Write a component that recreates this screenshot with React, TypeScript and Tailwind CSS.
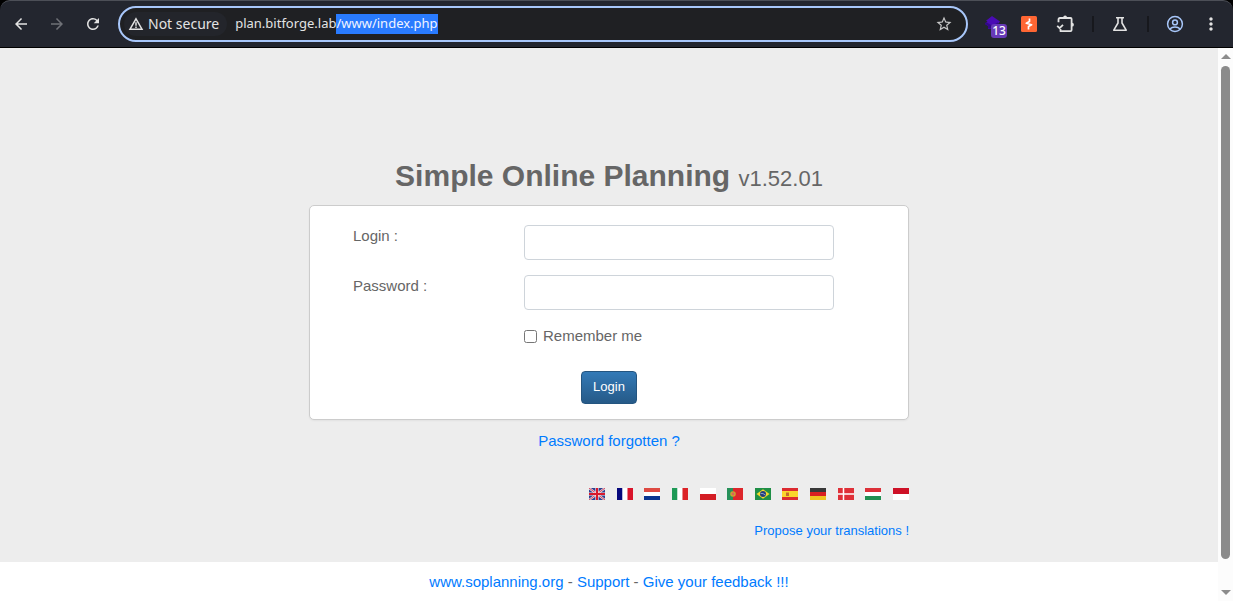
import { useEffect, useRef } from "react";
import type { ReactNode } from "react";
import {
  MdArrowBack,
  MdArrowForward,
  MdRefresh,
  MdMoreVert,
  MdStarOutline,
} from "react-icons/md";

const ADDRESS = "plan.bitforge.lab/www/index.php";

function BarButton({ label, children }: { label: string; children: ReactNode }) {
  return (
    <button
      type="button"
      aria-label={label}
      className="relative flex h-7 w-7 shrink-0 items-center justify-center text-[#e3e3e3]"
    >
      {children}
    </button>
  );
}

function Divider() {
  return (
    <span className="flex w-[11px] shrink-0 justify-center">
      <span className="h-4 w-0.5 bg-[#17181d]" />
    </span>
  );
}

function AddressField() {
  const ref = useRef<HTMLInputElement>(null);
  useEffect(() => {
    const el = ref.current;
    if (!el) return;
    el.focus();
    el.setSelectionRange(ADDRESS.indexOf("/"), ADDRESS.length);
  }, []);
  return (
    <input
      ref={ref}
      type="text"
      aria-label="Address"
      defaultValue={ADDRESS}
      spellCheck={false}
      className="min-w-0 flex-1 bg-transparent text-[13px] text-[#e3e3e3] outline-none selection:bg-[#297bff] selection:text-[#f0f4ff]"
    />
  );
}

function BrowserBar() {
  return (
    <header className="flex h-12 shrink-0 items-center rounded-t-[10px] border-t border-b border-t-[#4c4f57] border-b-black bg-[#23262f] font-['Noto_Sans',sans-serif]">
      <div className="flex gap-2 pr-[11px] pl-[7px]">
        <BarButton label="Back">
          <MdArrowBack className="h-[18px] w-[18px]" />
        </BarButton>
        <BarButton label="Forward">
          <MdArrowForward className="h-[18px] w-[18px] text-[#6f7177]" />
        </BarButton>
        <BarButton label="Reload">
          <MdRefresh className="h-[18px] w-[18px]" />
        </BarButton>
      </div>
      <div className="flex h-9 min-w-0 flex-1 items-center rounded-full border-2 border-[#a8c7fa] bg-[#1f2023] pr-2 pl-1">
        <button
          type="button"
          className="mr-2 flex h-6 shrink-0 items-center gap-1 rounded-full bg-[#23252b] pr-2 pl-1 text-sm text-[#e3e3e3]"
        >
          <svg viewBox="0 0 16 16" className="h-4 w-4" fill="none" stroke="currentColor" strokeWidth="1.5">
            <path d="M8 2.8 14 13.2H2Z" />
            <path d="M8 6.3v3.4M8 10.5v1.5" />
          </svg>
          Not secure
        </button>
        <AddressField />
        <button type="button" aria-label="Bookmark this page" className="flex h-7 w-7 items-center justify-center text-[#c7c7c7]">
          <MdStarOutline className="h-[18px] w-[18px]" />
        </button>
      </div>
      <div className="flex items-center gap-2 pr-2 pl-[11px]">
        <BarButton label="Extension with 13 items">
          <svg viewBox="0 0 16 16" className="h-4 w-4">
            <path d="M7 0 15 5.500 13 8v5H3V10L0 8l2.500-2.500L1 4.800Z" fill="#4a0bb5" />
            <path d="M1 6l6 3.500 6-3v6H3V10L0 8Z" fill="#33088a" />
          </svg>
          <span className="absolute right-0 bottom-0 flex h-3.5 w-4 items-center justify-center rounded-[3px] bg-[#673ab7] text-[12px] font-medium text-white">
            13
          </span>
        </BarButton>
        <BarButton label="Proxy extension">
          <svg viewBox="0 0 16 16" className="h-4 w-4">
            <rect width="16" height="16" rx="1.5" fill="#ff6633" />
            <path d="M8.500 2.500V5.500L5.300 7.300 10.600 8.700 7.500 10.500V13.500" fill="none" stroke="#fff" strokeWidth="1.700" strokeLinejoin="round" />
          </svg>
        </BarButton>
        <BarButton label="Extensions">
          <svg viewBox="0 0 20 20" className="h-5 w-5" fill="none" stroke="currentColor" strokeWidth="1.8" strokeLinejoin="round">
            <path d="M3.500 8.200V5.500Q3.500 4 5 4H15.500Q16.600 4 16.600 5V16Q16.600 17.200 15.500 17.200H5.500V15" />
            <path d="M2.200 11.800 4.600 14.200 8 10.800" />
            <path d="M8.200 3.500a1.900 1.900 0 0 1 3.800 0ZM17 8.800a1.900 1.900 0 0 1 0 3.800Z" fill="currentColor" stroke="none" />
          </svg>
        </BarButton>
        <Divider />
        <BarButton label="Labs">
          <svg viewBox="0 0 16 16" className="h-4 w-4" fill="none" stroke="currentColor" strokeWidth="1.6" strokeLinejoin="round">
            <path d="M4 1.8h8M6 2v5L1.8 14.2h12.4L10 7V2" />
          </svg>
        </BarButton>
        <Divider />
        <BarButton label="Profile">
          <svg viewBox="0 0 18 18" className="h-[18px] w-[18px] text-[#a8c7fa]" fill="none" stroke="currentColor" strokeWidth="1.5">
            <circle cx="9" cy="9" r="7.4" />
            <circle cx="9" cy="7.4" r="2.4" />
            <path d="M3.8 14c1.4-1.4 3.2-2 5.2-2s3.800.6 5.200 2" />
          </svg>
        </BarButton>
        <BarButton label="Menu">
          <MdMoreVert className="h-5 w-5" />
        </BarButton>
      </div>
    </header>
  );
}

const flags: { name: string; art: ReactNode }[] = [
  {
    name: "English",
    art: (
      <>
        <path d="M0 0h16v12H0z" fill="#2f4190" />
        <path d="M0 0l16 12M16 0 0 12" stroke="#e9dbe4" strokeWidth="2.200" />
        <path d="M0 0l16 12M16 0 0 12" stroke="#d8485c" strokeWidth="1" />
        <path d="M8 0v12M0 6h16" stroke="#f7e6ea" strokeWidth="3.200" />
        <path d="M8 0v12M0 6h16" stroke="#d8182c" strokeWidth="2" />
      </>
    ),
  },
  {
    name: "Français",
    art: (
      <>
        <path d="M0 0h5.500v12H0z" fill="#06087c" />
        <path d="M5.500 0h5v12h-5z" fill="#fff" />
        <path d="M10.500 0H16v12h-5.500z" fill="#d9142b" />
      </>
    ),
  },
  {
    name: "Nederlands",
    art: (
      <>
        <path d="M0 0h16v4H0z" fill="#de4a42" />
        <path d="M0 4h16v4H0z" fill="#fff" />
        <path d="M0 8h16v4H0z" fill="#0a3590" />
      </>
    ),
  },
  {
    name: "Italiano",
    art: (
      <>
        <path d="M0 0h5.500v12H0z" fill="#1f9a57" />
        <path d="M5.500 0h5v12h-5z" fill="#fff" />
        <path d="M10.500 0H16v12h-5.500z" fill="#dc2327" />
      </>
    ),
  },
  {
    name: "Polski",
    art: (
      <>
        <path d="M0 0h16v6H0z" fill="#fff" />
        <path d="M0 6h16v6H0z" fill="#d41e25" />
      </>
    ),
  },
  {
    name: "Português",
    art: (
      <>
        <path d="M0 0h6v12H0z" fill="#27915a" />
        <path d="M6 0h10v12H6z" fill="#dd262b" />
        <circle cx="6" cy="6" r="2.800" fill="#c9a52c" />
        <circle cx="6" cy="6" r="1.400" fill="#d9645c" />
      </>
    ),
  },
  {
    name: "Português (Brasil)",
    art: (
      <>
        <path d="M0 0h16v12H0z" fill="#1f8f46" />
        <path d="M8 1.200 14.500 6 8 10.800 1.500 6Z" fill="#f4d92c" />
        <circle cx="8" cy="6" r="3" fill="#233f7f" />
        <path d="M5.600 5.400q2.600-.4 4.800 1.600" stroke="#d4dcea" strokeWidth=".6" fill="none" />
      </>
    ),
  },
  {
    name: "Español",
    art: (
      <>
        <path d="M0 0h16v12H0z" fill="#fad52c" />
        <path d="M0 0h16v3H0zM0 9h16v3H0z" fill="#dc2a30" />
        <path d="M4 4.500h3v3.500H4z" fill="#c56a2c" />
      </>
    ),
  },
  {
    name: "Deutsch",
    art: (
      <>
        <path d="M0 0h16v4H0z" fill="#383838" />
        <path d="M0 4h16v4H0z" fill="#d91f22" />
        <path d="M0 8h16v4H0z" fill="#f0c321" />
      </>
    ),
  },
  {
    name: "Dansk",
    art: (
      <>
        <path d="M0 0h16v12H0z" fill="#df3038" />
        <path d="M5.500 0v12M0 6h16" stroke="#fff" strokeWidth="1.500" />
      </>
    ),
  },
  {
    name: "Magyar",
    art: (
      <>
        <path d="M0 0h16v4H0z" fill="#dc3038" />
        <path d="M0 4h16v4H0z" fill="#fff" />
        <path d="M0 8h16v4H0z" fill="#228f52" />
      </>
    ),
  },
  {
    name: "Bahasa Indonesia",
    art: (
      <>
        <path d="M0 0h16v6H0z" fill="#ce1127" />
        <path d="M0 6h16v6H0z" fill="#fff" />
      </>
    ),
  },
];

const fieldClass =
  "h-[35px] w-[310px] rounded border border-[#ced4da] bg-white px-3 text-[15px] outline-none";

function LoginForm() {
  return (
    <form
      className="rounded-[5px] border border-[#ccc] bg-white px-[43px] pt-[19px] pb-[15px] shadow-xs"
      onSubmit={(e) => e.preventDefault()}
    >
      <div className="grid grid-cols-[171px_1fr] gap-y-[15px]">
        <label htmlFor="login" className="leading-[22px]">
          Login :
        </label>
        <input id="login" type="text" className={fieldClass} />
        <label htmlFor="password" className="leading-[22px]">
          Password :
        </label>
        <input id="password" type="password" className={fieldClass} />
        <div className="col-start-2 flex items-center gap-1.5 leading-[22px]">
          <input id="remember" type="checkbox" className="h-[13px] w-[13px]" />
          <label htmlFor="remember">Remember me</label>
        </div>
      </div>
      <div className="mt-6 flex justify-center">
        <button
          type="submit"
          className="h-[33px] rounded border border-[#245580] bg-linear-to-b from-[#337ab7] to-[#265a88] px-[11px] pb-0.5 text-[13px] text-white"
        >
          Login
        </button>
      </div>
    </form>
  );
}

function Scrollbar() {
  return (
    <div aria-hidden="true" className="flex w-[15px] shrink-0 flex-col items-center justify-between bg-[#fcfcfc] py-1.5">
      <svg viewBox="0 0 10 5" className="h-[5px] w-2.5" fill="#8b8b8b">
        <path d="M5 0l5 5H0z" />
      </svg>
      <div className="mt-[7px] mb-[31px] w-[9px] flex-1 rounded-full bg-[#8b8b8b]" />
      <svg viewBox="0 0 10 5" className="h-[5px] w-2.5" fill="#8b8b8b">
        <path d="M5 5l5-5H0z" />
      </svg>
    </div>
  );
}

export default function App() {
  return (
    <div className="flex min-h-screen flex-col bg-black">
      <BrowserBar />
      <div className="flex flex-1 bg-white font-['Liberation_Sans',Arial,sans-serif] text-[15px] text-[#666]">
        <div className="flex min-w-0 flex-1 flex-col">
          <main className="flex-1 bg-[#ededed] pt-[110px]">
            <div className="mx-auto max-w-[600px]">
              <h1 className="mb-2 text-center text-[30px] leading-9 font-bold">
                Simple Online Planning <small className="text-[22px] font-normal">v1.52.01</small>
              </h1>
              <LoginForm />
              <p className="mt-2.5 text-center leading-[22px]">
                <a href="#forgotten" className="text-[#007bff]">
                  Password forgotten ?
                </a>
              </p>
              <nav aria-label="Languages" className="mt-9 ml-auto flex w-80 justify-between">
                {flags.map((flag) => (
                  <a key={flag.name} href="#language" aria-label={flag.name}>
                    <svg viewBox="0 0 16 12" className="block h-3 w-4">
                      {flag.art}
                    </svg>
                  </a>
                ))}
              </nav>
              <p className="mt-[21px] pb-5 text-right text-[13px] leading-5">
                <a href="#translations" className="text-[#007bff]">
                  Propose your translations !
                </a>
              </p>
            </div>
          </main>
          <footer className="pt-[9px] pb-2 text-center leading-[22px]">
            <a href="#site" className="text-[#007bff]">www.soplanning.org</a> -{" "}
            <a href="#support" className="text-[#007bff]">Support</a> -{" "}
            <a href="#feedback" className="text-[#007bff]">Give your feedback !!!</a>
          </footer>
        </div>
        <Scrollbar />
      </div>
    </div>
  );
}
